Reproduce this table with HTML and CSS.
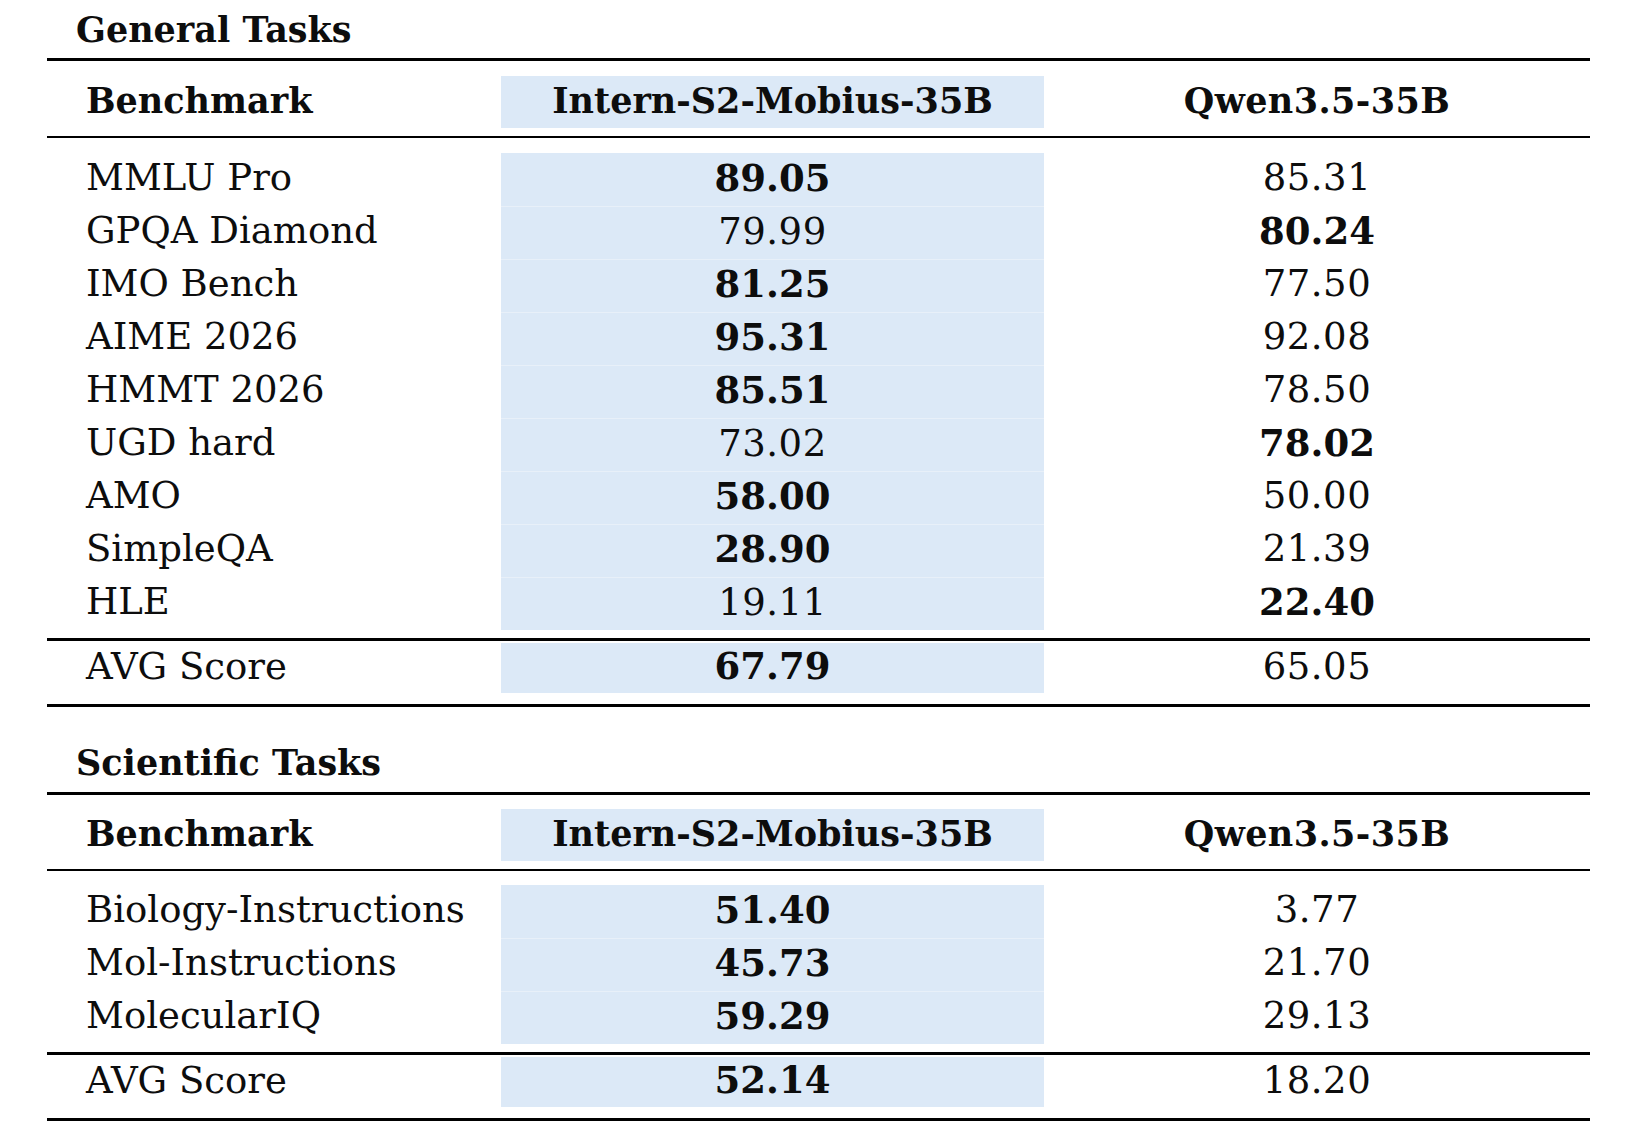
FILE: index.html
```html
<!DOCTYPE html>
<html lang="en">
<head>
<meta charset="utf-8">
<title>Benchmark results</title>
<link rel="stylesheet" href="styles.css">
</head>
<body>
<main class="page">
  <section class="block">
    <h2 class="block-title">General Tasks</h2>
    <div class="rule rule-thick"></div>
    <div class="row row-head">
      <div class="cell cell-name">Benchmark</div>
      <div class="cell cell-ours">Intern-S2-Mobius-35B</div>
      <div class="cell cell-other">Qwen3.5-35B</div>
    </div>
    <div class="rule rule-mid"></div>
    <div class="rows">
      <div class="row"><div class="cell cell-name">MMLU Pro</div><div class="cell cell-ours num best">89.05</div><div class="cell cell-other num">85.31</div></div>
      <div class="row"><div class="cell cell-name">GPQA Diamond</div><div class="cell cell-ours num">79.99</div><div class="cell cell-other num best">80.24</div></div>
      <div class="row"><div class="cell cell-name">IMO Bench</div><div class="cell cell-ours num best">81.25</div><div class="cell cell-other num">77.50</div></div>
      <div class="row"><div class="cell cell-name">AIME 2026</div><div class="cell cell-ours num best">95.31</div><div class="cell cell-other num">92.08</div></div>
      <div class="row"><div class="cell cell-name">HMMT 2026</div><div class="cell cell-ours num best">85.51</div><div class="cell cell-other num">78.50</div></div>
      <div class="row"><div class="cell cell-name">UGD hard</div><div class="cell cell-ours num">73.02</div><div class="cell cell-other num best">78.02</div></div>
      <div class="row"><div class="cell cell-name">AMO</div><div class="cell cell-ours num best">58.00</div><div class="cell cell-other num">50.00</div></div>
      <div class="row"><div class="cell cell-name">SimpleQA</div><div class="cell cell-ours num best">28.90</div><div class="cell cell-other num">21.39</div></div>
      <div class="row"><div class="cell cell-name">HLE</div><div class="cell cell-ours num">19.11</div><div class="cell cell-other num best">22.40</div></div>
    </div>
    <div class="rule rule-thick"></div>
    <div class="row row-avg">
      <div class="cell cell-name">AVG Score</div>
      <div class="cell cell-ours num best">67.79</div>
      <div class="cell cell-other num">65.05</div>
    </div>
    <div class="rule rule-thick"></div>
  </section>

  <section class="block block-second">
    <h2 class="block-title">Scientific Tasks</h2>
    <div class="rule rule-thick"></div>
    <div class="row row-head">
      <div class="cell cell-name">Benchmark</div>
      <div class="cell cell-ours">Intern-S2-Mobius-35B</div>
      <div class="cell cell-other">Qwen3.5-35B</div>
    </div>
    <div class="rule rule-mid"></div>
    <div class="rows">
      <div class="row"><div class="cell cell-name">Biology-Instructions</div><div class="cell cell-ours num best">51.40</div><div class="cell cell-other num">3.77</div></div>
      <div class="row"><div class="cell cell-name">Mol-Instructions</div><div class="cell cell-ours num best">45.73</div><div class="cell cell-other num">21.70</div></div>
      <div class="row"><div class="cell cell-name">MolecularIQ</div><div class="cell cell-ours num best">59.29</div><div class="cell cell-other num">29.13</div></div>
    </div>
    <div class="rule rule-thick"></div>
    <div class="row row-avg">
      <div class="cell cell-name">AVG Score</div>
      <div class="cell cell-ours num best">52.14</div>
      <div class="cell cell-other num">18.20</div>
    </div>
    <div class="rule rule-thick"></div>
  </section>
</main>
</body>
</html>
```

FILE: styles.css
```css
html, body {
  margin: 0;
  padding: 0;
  background: #ffffff;
}

body {
  font-family: "DejaVu Serif", "Liberation Serif", serif;
  font-size: 37px;
  color: #0d0d0d;
}

.page {
  width: 1543px;
  margin-left: 47px;
}

.block-title {
  margin: 10px 0 0 29px;
  font-size: 35px;
  font-weight: bold;
  line-height: 40px;
  height: 40px;
}

.block-second .block-title {
  margin-top: 36px;
}

.block-title + .rule {
  margin-top: 8px;
}

.block-second .block-title + .rule {
  margin-top: 9px;
}

.rule {
  background: #000000;
}

.rule-thick {
  height: 3px;
}

.rule-mid {
  height: 2px;
}

.row {
  display: grid;
  grid-template-columns: 454px 543px 1fr;
  height: 53px;
}

.row-head {
  height: 52px;
  padding: 15px 0 8px;
  font-size: 35px;
  font-weight: bold;
}

.row-head .cell-other {
  letter-spacing: 0.4px;
}

.block-second .row-head {
  padding-top: 14px;
}

.rows {
  padding: 15px 0 8px;
}

.block-second .rows {
  padding-top: 14px;
}

.rows .row + .row .cell-ours {
  border-top: 1px solid #e8f0f9;
}

.row-avg {
  height: 50px;
  padding: 2px 0 11px;
}

.cell {
  display: flex;
  align-items: center;
  padding-bottom: 4px;
  box-sizing: border-box;
  white-space: nowrap;
}

.cell-name {
  padding-left: 39px;
}

.cell-ours {
  justify-content: center;
  background: #dce9f7;
}

.cell-other {
  justify-content: center;
}

.num {
  letter-spacing: 0.5px;
}

.num.best {
  letter-spacing: 0;
}

.best {
  font-weight: bold;
}
```
